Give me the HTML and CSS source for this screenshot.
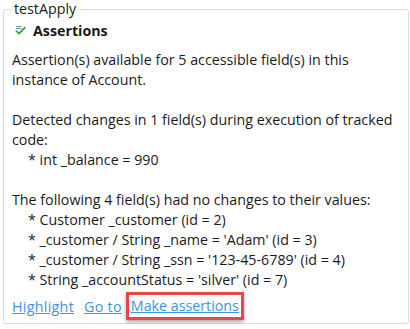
FILE: index.html
```html
<!DOCTYPE html>
<html>
<head>
<meta charset="utf-8">
<link rel="stylesheet" href="styles.css">
</head>
<body>
<fieldset class="group">
  <legend class="group-title">testApply</legend>
  <div class="section-head">
    <svg class="assert-icon" width="11" height="10" viewBox="0 0 11 10">
      <path d="M1 1.5H6.5M1 3.5H6.5" stroke="#6f8aa6" stroke-width="1.2" fill="none"/>
      <path d="M1.5 6.2L4 8.6L9.8 2.6" stroke="#3f9a2f" stroke-width="1.8" fill="none" stroke-linecap="round" stroke-linejoin="round"/>
    </svg>
    <span class="section-title">Assertions</span>
  </div>
  <p class="para">Assertion(s) available for 5 accessible field(s) in this instance of Account.</p>
  <p class="para">Detected changes in 1 field(s) during execution of tracked code:<br><span class="item">* int _balance = 990</span></p>
  <p class="para">The following 4 field(s) had no changes to their values:<br>
    <span class="item">* Customer _customer (id = 2)</span><br>
    <span class="item">* _customer / String _name = 'Adam' (id = 3)</span><br>
    <span class="item">* _customer / String _ssn = '123-45-6789' (id = 4)</span><br>
    <span class="item">* String _accountStatus = 'silver' (id = 7)</span></p>
  <div class="links">
    <a class="link link-wide" href="#">Highlight</a>
    <a class="link link-wide" href="#">Go to</a>
    <span class="callout"><a class="link" href="#">Make assertions</a></span>
  </div>
</fieldset>
</body>
</html>
```

FILE: styles.css
```css
html, body {
  margin: 0;
  padding: 0;
  background: #ffffff;
}
body {
  font-family: "Open Sans", "Noto Sans", sans-serif;
  font-size: 14.25px;
  color: #1a1a1a;
  width: 410px;
  height: 329px;
  overflow: hidden;
}
.group {
  margin: 0 1px 0 3px;
  padding: 0 8px 0 8px;
  border: 1px solid #d3dde5;
  border-radius: 3px;
  height: 324px;
  box-sizing: border-box;
  min-width: 0;
}
.group-title {
  padding: 0 2px;
  margin-left: 0;
  line-height: 18px;
  font-size: 14.25px;
  color: #1a1a1a;
}
.section-head {
  display: flex;
  align-items: center;
  gap: 7px;
  height: 22px;
  margin-top: 1px;
  padding-left: 3px;
}
.assert-icon {
  display: block;
}
.section-title {
  font-weight: bold;
  font-size: 14.25px;
}
.para {
  margin: 0 0 20px 0;
  line-height: 20px;
}
.section-head + .para {
  margin-top: 9px;
}
.item {
  padding-left: 16px;
}
.links {
  display: flex;
  align-items: center;
  gap: 10px;
  height: 28px;
  margin-top: -18px;
}
.link {
  color: #3d92e8;
  text-decoration: underline;
}
.link-wide {
  letter-spacing: 0.3px;
}
.callout {
  border: 3px solid #e8474a;
  padding: 0 2px;
  line-height: 22px;
  box-shadow: 0 2px 4px rgba(0,0,0,0.35);
  margin-left: -6px;
}
```
